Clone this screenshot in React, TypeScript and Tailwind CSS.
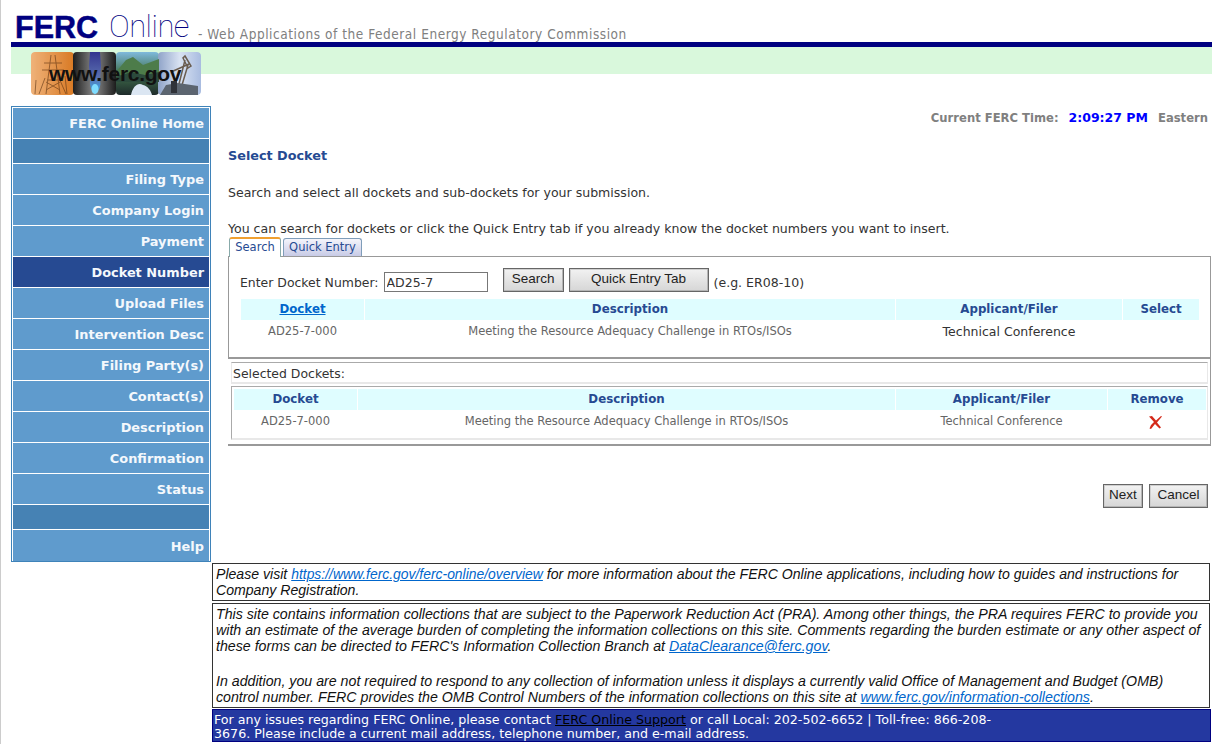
import React from "react";

const nav: { label: string; kind?: "band" | "active" }[] = [
  { label: "FERC Online Home" },
  { label: "", kind: "band" },
  { label: "Filing Type" },
  { label: "Company Login" },
  { label: "Payment" },
  { label: "Docket Number", kind: "active" },
  { label: "Upload Files" },
  { label: "Intervention Desc" },
  { label: "Filing Party(s)" },
  { label: "Contact(s)" },
  { label: "Description" },
  { label: "Confirmation" },
  { label: "Status" },
  { label: "", kind: "band" },
  { label: "Help" },
];

function Logo() {
  return (
    <div className="relative ml-[20px] flex h-[43px] w-[170px] overflow-hidden rounded-[3px]">
      <svg width="170" height="43" viewBox="0 0 170 43" className="absolute inset-0">
        <defs>
          <linearGradient id="a" x1="0" y1="0" x2="1" y2="0">
            <stop offset="0" stopColor="#efb27a" />
            <stop offset="1" stopColor="#d97a24" />
          </linearGradient>
          <linearGradient id="b" x1="0" y1="0" x2="1" y2="0">
            <stop offset="0" stopColor="#1f1f1f" />
            <stop offset=".5" stopColor="#8a8a8a" />
            <stop offset="1" stopColor="#1c1c1c" />
          </linearGradient>
          <linearGradient id="c" x1="0" y1="0" x2="0" y2="1">
            <stop offset="0" stopColor="#7fb9dc" />
            <stop offset=".5" stopColor="#3f6f4c" />
            <stop offset="1" stopColor="#1e2a2a" />
          </linearGradient>
          <linearGradient id="d" x1="0" y1="0" x2="1" y2="0">
            <stop offset="0" stopColor="#8fa3c8" />
            <stop offset=".5" stopColor="#d8e2f2" />
            <stop offset="1" stopColor="#a9bce0" />
          </linearGradient>
          <linearGradient id="f" x1="0" y1="0" x2="0" y2="1">
            <stop offset="0" stopColor="#33358f" />
            <stop offset=".6" stopColor="#5a6fb0" />
            <stop offset="1" stopColor="#38b0ee" />
          </linearGradient>
        </defs>
        <rect width="43" height="43" rx="4" fill="url(#a)" />
        <rect x="42" width="43" height="43" rx="4" fill="url(#b)" />
        <rect x="85" width="43" height="43" rx="4" fill="url(#c)" />
        <rect x="127" width="43" height="43" rx="4" fill="url(#d)" />
        <path d="M59 0h10l1 14-1 14q2 8-5 14q-6-6-5-14l-1-14z" fill="url(#f)" />
        <ellipse cx="64" cy="37" rx="3.5" ry="5" fill="#7fdcff" />
        <g stroke="#5f3413" strokeWidth="1" fill="none" opacity=".6">
          <path d="M20 3l-5 39M24 3l5 39M13 11h18M11 18h22M16 28h12M8 42l6-16M28 26l7 16M15 30l14 8M29 30l-14 8" />
          <path d="M34 24l2 18M5 28l-1 14" />
        </g>
        <path d="M85 20l10-12 7-3 10 8 16-6v16H85z" fill="#4d7c4a" />
        <path d="M85 25l15-5 14 3 14-3v10H85z" fill="#2c4a3c" />
        <path d="M100 43c2-9 7-13 12-10 5 1 8 6 9 10z" fill="#dbe6f2" />
        <path d="M148 32l6-24M151 33l6-20M154 4l6 10-3 2-5-10zM140 20l18-8" stroke="#6a5d50" strokeWidth="1.5" fill="none" />
        <path d="M129 43l6-10 12-2 20 3v9z" fill="#5c6570" />
        <rect x="140" y="29" width="6" height="12" fill="#2f3238" />
      </svg>
      <span className="relative z-10 mt-[9px] ml-[18px] font-['Liberation_Sans',sans-serif] text-[21px] leading-[26px] font-bold tracking-[-0.3px] text-[#111]">
        www.ferc.gov
      </span>
    </div>
  );
}

function Th({ children, className = "" }: { children?: React.ReactNode; className?: string }) {
  return (
    <div className={`flex h-[21px] items-center justify-center bg-[#dffdff] text-[11.8px] font-bold text-[#264a92] ${className}`}>
      {children}
    </div>
  );
}

function Btn({ children, className = "" }: { children: React.ReactNode; className?: string }) {
  return (
    <button className={`h-[24px] border border-[#666] bg-gradient-to-b from-[#f2f2f2] to-[#d6d6d6] pb-[2px] font-['Liberation_Sans',sans-serif] text-[13.5px] leading-none text-[#222] shadow-[inset_-1px_-1px_0_#b5b5b5,inset_1px_1px_0_#cfcfcf] ${className}`}>
      {children}
    </button>
  );
}

export default function App() {
  return (
    <div className="h-[744px] w-[1212px] overflow-hidden border-l-[1px] border-[#cccccc] bg-white font-['DejaVu_Sans',sans-serif] text-[12.55px] text-[#333]">
      <div className="flex h-[42px] items-end pl-[14px]">
        <span className="mb-[-2px] w-[94px] font-['Liberation_Sans',sans-serif] text-[30.5px] leading-[34px] font-bold text-[#000080] [-webkit-text-stroke:0.5px_#000080]">FERC</span>
        <span className="mb-[-2px] w-[89px] font-['Roboto',sans-serif] text-[31px] leading-[34px] font-thin tracking-[-0.5px] text-[#000080]">Online</span>
        <span className="font-['DejaVu_Sans_Condensed','DejaVu_Sans',sans-serif] text-[13.5px] leading-[16px] tracking-[0.55px] text-[#808080]">- Web Applications of the Federal Energy Regulatory Commission</span>
      </div>
      <div className="ml-[10px] h-[5px] bg-[#000080]" />
      <div className="ml-[10px] h-[48px]">
        <div className="h-[27px] bg-[#d9f8dc] pt-[5px]">
          <Logo />
        </div>
      </div>
      <div className="mt-[11px] flex">
        <div className="ml-[10px] w-[200px]">
          <nav className="h-[456px] border border-[#3f83b9] p-[1px]">
            {nav.map((n, i) => (
              <div
                key={i}
                className={`flex items-center justify-end border-b border-white pt-[2px] pr-[5px] text-[12.9px] font-bold text-[#f4f8fc] last:border-b-0 ${
                  n.kind === "band"
                    ? "h-[25px] bg-[#4682b4]"
                    : n.kind === "active"
                      ? "h-[31px] bg-[#264a92]"
                      : "h-[31px] bg-[#5f9bcd]"
                }`}
              >
                {n.label}
              </div>
            ))}
          </nav>
        </div>
        <div className="flex-1">
          <div className="h-[457px] pl-[17px]">
            <div className="flex h-[22px] items-center justify-end gap-[10px] pt-[3px] pr-[4px] text-[11.6px] font-bold text-[#808080]">
              <span>Current FERC Time:</span>
              <span className="text-[12.5px] text-[#0000ff]">2:09:27 PM</span>
              <span>Eastern</span>
            </div>
            <div className="mt-[20px] text-[12.8px] leading-[16px] font-bold text-[#264a92]">Select Docket</div>
            <div className="mt-[21px] leading-[16px]">Search and select all dockets and sub-dockets for your submission.</div>
            <div className="mt-[20px] leading-[16px]">You can search for dockets or click the Quick Entry tab if you already know the docket numbers you want to insert.</div>
            <div className="relative z-10 -mt-[1px] flex h-[20px] items-end pl-[1px] text-[11.5px]">
              <div className="mb-[-1px] flex h-[20px] w-[52px] items-center justify-center rounded-t-[3px] border border-[#8aa] border-t-2 border-b-0 border-t-[#f0a030] bg-white text-[#264a92]">Search</div>
              <div className="ml-[2px] flex h-[18px] w-[79px] items-center justify-center rounded-t-[3px] border border-[#7f9db9] border-b-0 bg-gradient-to-b from-[#f4f4fb] to-[#c8cbe6] text-[#264a92]">Quick Entry</div>
            </div>
            <div className="h-[103px] w-[983px] border border-[#999] border-b-2 px-[12px] pt-[11px]">
              <div className="flex h-[25px] items-start">
                <span className="mt-[7px] mr-[5px] ml-[-1px] text-[12.45px] leading-[16px]">Enter Docket Number:</span>
                <input readOnly value="AD25-7" className="mt-[4px] h-[20px] w-[104px] border border-[#777] px-[2px] text-[12.5px] text-[#333] outline-none" />
                <Btn className="ml-[15px] w-[61px]">Search</Btn>
                <Btn className="ml-[5px] w-[140px]">Quick Entry Tab</Btn>
                <span className="mt-[7px] ml-[5px] leading-[16px]">(e.g. ER08-10)</span>
              </div>
              <div className="mt-[6px] grid w-[957px] grid-cols-[123px_530px_226px_76px] gap-x-[1px]">
                <Th><span className="text-[#0066cc] underline">Docket</span></Th>
                <Th>Description</Th>
                <Th>Applicant/Filer</Th>
                <Th>Select</Th>
              </div>
              <div className="grid h-[24px] w-[957px] grid-cols-[123px_530px_226px_76px] items-center gap-x-[1px] text-center text-[11.5px] text-[#666]">
                <span>AD25-7-000</span>
                <span>Meeting the Resource Adequacy Challenge in RTOs/ISOs</span>
                <span className="text-[12.5px] text-[#333]">Technical Conference</span>
                <span />
              </div>
            </div>
            <div className="h-[87px] w-[983px] border border-t-0 border-r border-b-2 border-l-0 border-[#999] pt-[3px] pl-[3px]">
              <div className="flex h-[22px] w-[977px] items-center border border-[#aaa] border-r-[#e8e8e8] border-b-2 border-b-[#e8e8e8] border-l-[#e8e8e8] pt-[3px] pl-[1px] text-[12.45px]">Selected Dockets:</div>
              <div className="mt-[2px] h-[54px] w-[977px] border border-[#aaa] border-r-[#e8e8e8] border-b-2 border-b-[#e8e8e8] p-[2px]">
                <div className="grid grid-cols-[123px_537px_211px_98px] gap-x-[1px]">
                  <Th>Docket</Th>
                  <Th>Description</Th>
                  <Th>Applicant/Filer</Th>
                  <Th>Remove</Th>
                </div>
                <div className="grid h-[24px] grid-cols-[123px_537px_211px_98px] items-center gap-x-[1px] text-center text-[11.5px] text-[#666]">
                  <span>AD25-7-000</span>
                  <span>Meeting the Resource Adequacy Challenge in RTOs/ISOs</span>
                  <span>Technical Conference</span>
                  <span className="flex justify-center pr-[4px]">
                    <svg width="15" height="15" viewBox="0 0 15 15">
                      <path d="M1 1.5L4 1l4 4.5 5-4.5 1 .4L9 7.5l4 5-1.5 1L7 9l-4 5-1.5-.5L3 10l3-3z" fill="#d42a1a" />
                    </svg>
                  </span>
                </div>
              </div>
            </div>
            <div className="mt-[38px] flex w-[980px] justify-end gap-[6px]">
              <Btn className="w-[40px]">Next</Btn>
              <Btn className="w-[59px]">Cancel</Btn>
            </div>
          </div>
          <div className="pl-[1px] font-['Liberation_Sans',sans-serif] text-[14.2px] leading-[16px] text-[#111] italic">
            <div className="h-[38px] w-[998px] border border-[#333] px-[3px] pt-[2px] text-[14.1px]">
              Please visit <a className="text-[13.9px] text-[#0066cc] underline">https://www.ferc.gov/ferc-online/overview</a> for more information about the FERC Online applications, including how to guides and instructions for Company Registration.
            </div>
            <div className="mt-[2px] h-[105px] w-[998px] border border-[#333] px-[3px] pt-[2px]">
              This site contains information collections that are subject to the Paperwork Reduction Act (PRA). Among other things, the PRA requires FERC to provide you with an estimate of the average burden of completing the information collections on this site. Comments regarding the burden estimate or any other aspect of these forms can be directed to FERC's Information Collection Branch at <a className="text-[#0066cc] underline">DataClearance@ferc.gov</a>.
              <div className="h-[19px]" />
              In addition, you are not required to respond to any collection of information unless it displays a currently valid Office of Management and Budget (OMB) control number. FERC provides the OMB Control Numbers of the information collections on this site at <a className="text-[#0066cc] underline">www.ferc.gov/information-collections</a>.
            </div>
            <div className="mt-[1px] h-[33px] w-[999px] border border-[#000080] bg-[#2438a0] pt-[3px] pl-[1px] font-['DejaVu_Sans',sans-serif] text-[12.65px] leading-[14px] text-white not-italic">
              <div className="w-[800px]">
                For any issues regarding FERC Online, please contact <a className="text-black underline">FERC Online Support</a> or call Local: 202-502-6652 | Toll-free: 866-208-3676. Please include a current mail address, telephone number, and e-mail address.
              </div>
            </div>
          </div>
        </div>
      </div>
    </div>
  );
}
